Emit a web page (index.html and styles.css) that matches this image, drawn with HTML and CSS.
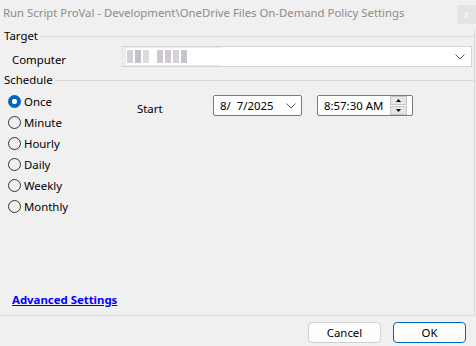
FILE: index.html
```html
<!DOCTYPE html>
<html lang="en">
<head>
    <meta charset="UTF-8">
    <title>OneDrive Files On-Demand Policy Settings</title>
    <link rel="stylesheet" href="styles.css">
</head>
<body>
    <div class="titlebar">
        <span class="title">Run Script ProVal - Development\OneDrive Files On-Demand Policy Settings</span>
        <span class="close">x</span>
    </div>

    <div class="panel">
        <div class="legend"><span>Target</span></div>
        <div class="computer-row">
            <label class="computer-label">Computer</label>
            <div class="combo">
                <div class="blur">
                    <span class="px" style="background:#c9c6ce"></span>
                    <span class="px" style="background:#b3b1bb"></span>
                    <span class="px" style="background:#d5d2d5"></span>
                    <span class="gap"></span>
                    <span class="px" style="background:#bdbac4"></span>
                    <span class="px" style="background:#c4bcc0"></span>
                    <span class="px" style="background:#cdc7cb"></span>
                    <span class="px" style="background:#b8b6c2"></span>
                </div>
                <svg class="chev" width="10" height="6" viewBox="0 0 10 6"><path d="M0.5 0.5 L5 5 L9.5 0.5" fill="none" stroke="#555" stroke-width="1"/></svg>
            </div>
        </div>

        <div class="legend schedule-legend"><span>Schedule</span></div>
        <div class="schedule">
            <div class="radios">
                <div class="radio checked"><span class="dot"></span>Once</div>
                <div class="radio"><span class="dot"></span>Minute</div>
                <div class="radio"><span class="dot"></span>Hourly</div>
                <div class="radio"><span class="dot"></span>Daily</div>
                <div class="radio"><span class="dot"></span>Weekly</div>
                <div class="radio"><span class="dot"></span>Monthly</div>
            </div>
            <div class="start">
                <span class="start-label">Start</span>
                <div class="datebox">
                    <span>8/&nbsp; 7/2025</span>
                    <svg class="chev" width="10" height="6" viewBox="0 0 10 6"><path d="M0.5 0.5 L5 5 L9.5 0.5" fill="none" stroke="#555" stroke-width="1"/></svg>
                </div>
                <div class="timebox">
                    <span>8:57:30 AM</span>
                    <div class="spin">
                        <div class="spin-btn"><svg width="5" height="3" viewBox="0 0 5 3"><path d="M2.5 0 L5 3 L0 3 Z" fill="#000"/></svg></div>
                        <div class="spin-btn"><svg width="5" height="3" viewBox="0 0 5 3"><path d="M0 0 L5 0 L2.5 3 Z" fill="#000"/></svg></div>
                    </div>
                </div>
            </div>
        </div>

        <div class="advanced"><a href="#">Advanced Settings</a></div>
    </div>

    <div class="buttons">
        <button class="btn">Cancel</button>
        <button class="btn primary">OK</button>
    </div>
</body>
</html>
```

FILE: styles.css
```css
body {
    margin: 0;
    width: 476px;
    height: 346px;
    background-color: #f0f0f0;
    font-family: "Noto Sans", "Open Sans", sans-serif;
    font-size: 11.4px;
    color: #000;
    overflow: hidden;
}

.titlebar {
    height: 30px;
    display: flex;
    align-items: flex-start;
    justify-content: space-between;
}

.title {
    margin: 4px 0 0 3px;
    color: #8c8c8c;
    font-size: 11.35px;
    line-height: 18px;
}

.close {
    margin-top: 5px;
    width: 19px;
    height: 19px;
    background-color: #e4e4e4;
    color: #fafafa;
    font-size: 10px;
    line-height: 18px;
    text-align: center;
}

.panel {
    width: 474px;
    height: 285px;
    border-right: 1px solid #d9d9d9;
    border-bottom: 1px solid #d9d9d9;
    display: flex;
    flex-direction: column;
}

.legend {
    display: flex;
    align-items: center;
    height: 12px;
    line-height: 12px;
    flex-shrink: 0;
}

.legend span {
    padding-left: 4px;
    padding-right: 2px;
}

.legend::after {
    content: "";
    flex: 1;
    border-top: 1px solid #d9d9d9;
}

.schedule-legend {
    margin-top: 7px;
}

.computer-row {
    display: flex;
    align-items: center;
    margin-top: 4px;
    height: 21px;
    flex-shrink: 0;
}

.computer-label {
    width: 121px;
    padding: 5px 0 0 12px;
    box-sizing: border-box;
}

.combo {
    flex: 1;
    margin-right: 2px;
    height: 21px;
    box-sizing: border-box;
    display: flex;
    align-items: center;
    justify-content: space-between;
    background: linear-gradient(to right, #ebebeb 0, #ebebeb 101px, #fff 101px);
    border: 1px solid #d4d4d4;
    border-left: none;
}

.blur {
    margin-left: 5px;
    width: 96px;
    height: 17px;
    background: #fff;
    display: flex;
    align-items: center;
    padding-left: 1px;
    box-sizing: border-box;
}

.px {
    width: 6px;
    height: 13px;
    margin-right: 2px;
    opacity: 0.8;
}

.gap {
    width: 6px;
}

.chev {
    margin-right: 6px;
}

.schedule {
    display: flex;
    margin-top: 9px;
    height: 197px;
    flex-shrink: 0;
}

.radios {
    width: 129px;
    padding-left: 8px;
    display: flex;
    flex-direction: column;
    gap: 8px;
}

.radio {
    display: flex;
    align-items: center;
    height: 13px;
    line-height: 13px;
}

.dot {
    width: 11px;
    height: 11px;
    border: 1px solid #333;
    border-radius: 50%;
    margin-right: 3px;
    box-sizing: content-box;
}

.radio.checked .dot {
    width: 13px;
    height: 13px;
    border: none;
    background: radial-gradient(circle, #fff 0, #fff 2.4px, #0067c0 3px);
}

.start {
    display: flex;
    align-items: flex-start;
}

.start-label {
    margin-top: 6px;
    width: 76px;
}

.datebox,
.timebox {
    height: 21px;
    background: #fff;
    border: 1px solid #7a7a7a;
    border-radius: 2px;
    display: flex;
    align-items: center;
    justify-content: space-between;
    padding-left: 6px;
    box-sizing: border-box;
}

.datebox {
    width: 89px;
    margin-right: 15px;
}

.datebox .chev {
    margin-right: 5px;
}

.timebox {
    width: 96px;
    padding-right: 5px;
}

.spin {
    display: flex;
    flex-direction: column;
    gap: 1px;
}

.spin-btn {
    width: 15px;
    height: 7px;
    background: #e6e6e6;
    border: 1px solid #c6c6c6;
    display: flex;
    align-items: center;
    justify-content: center;
}

.advanced {
    padding-left: 12px;
}

.advanced a {
    color: #0000ff;
    font-weight: bold;
    text-decoration: underline;
}

.buttons {
    display: flex;
    justify-content: flex-end;
    gap: 12px;
    padding: 6px 10px 0 0;
}

.btn {
    width: 73px;
    height: 21px;
    background: #fdfdfd;
    border: 1px solid #d0d0d0;
    border-radius: 4px;
    font-family: "Noto Sans", "Open Sans", sans-serif;
    font-size: 11.4px;
    padding: 0;
}

.btn.primary {
    border-color: #0067c0;
}
```
